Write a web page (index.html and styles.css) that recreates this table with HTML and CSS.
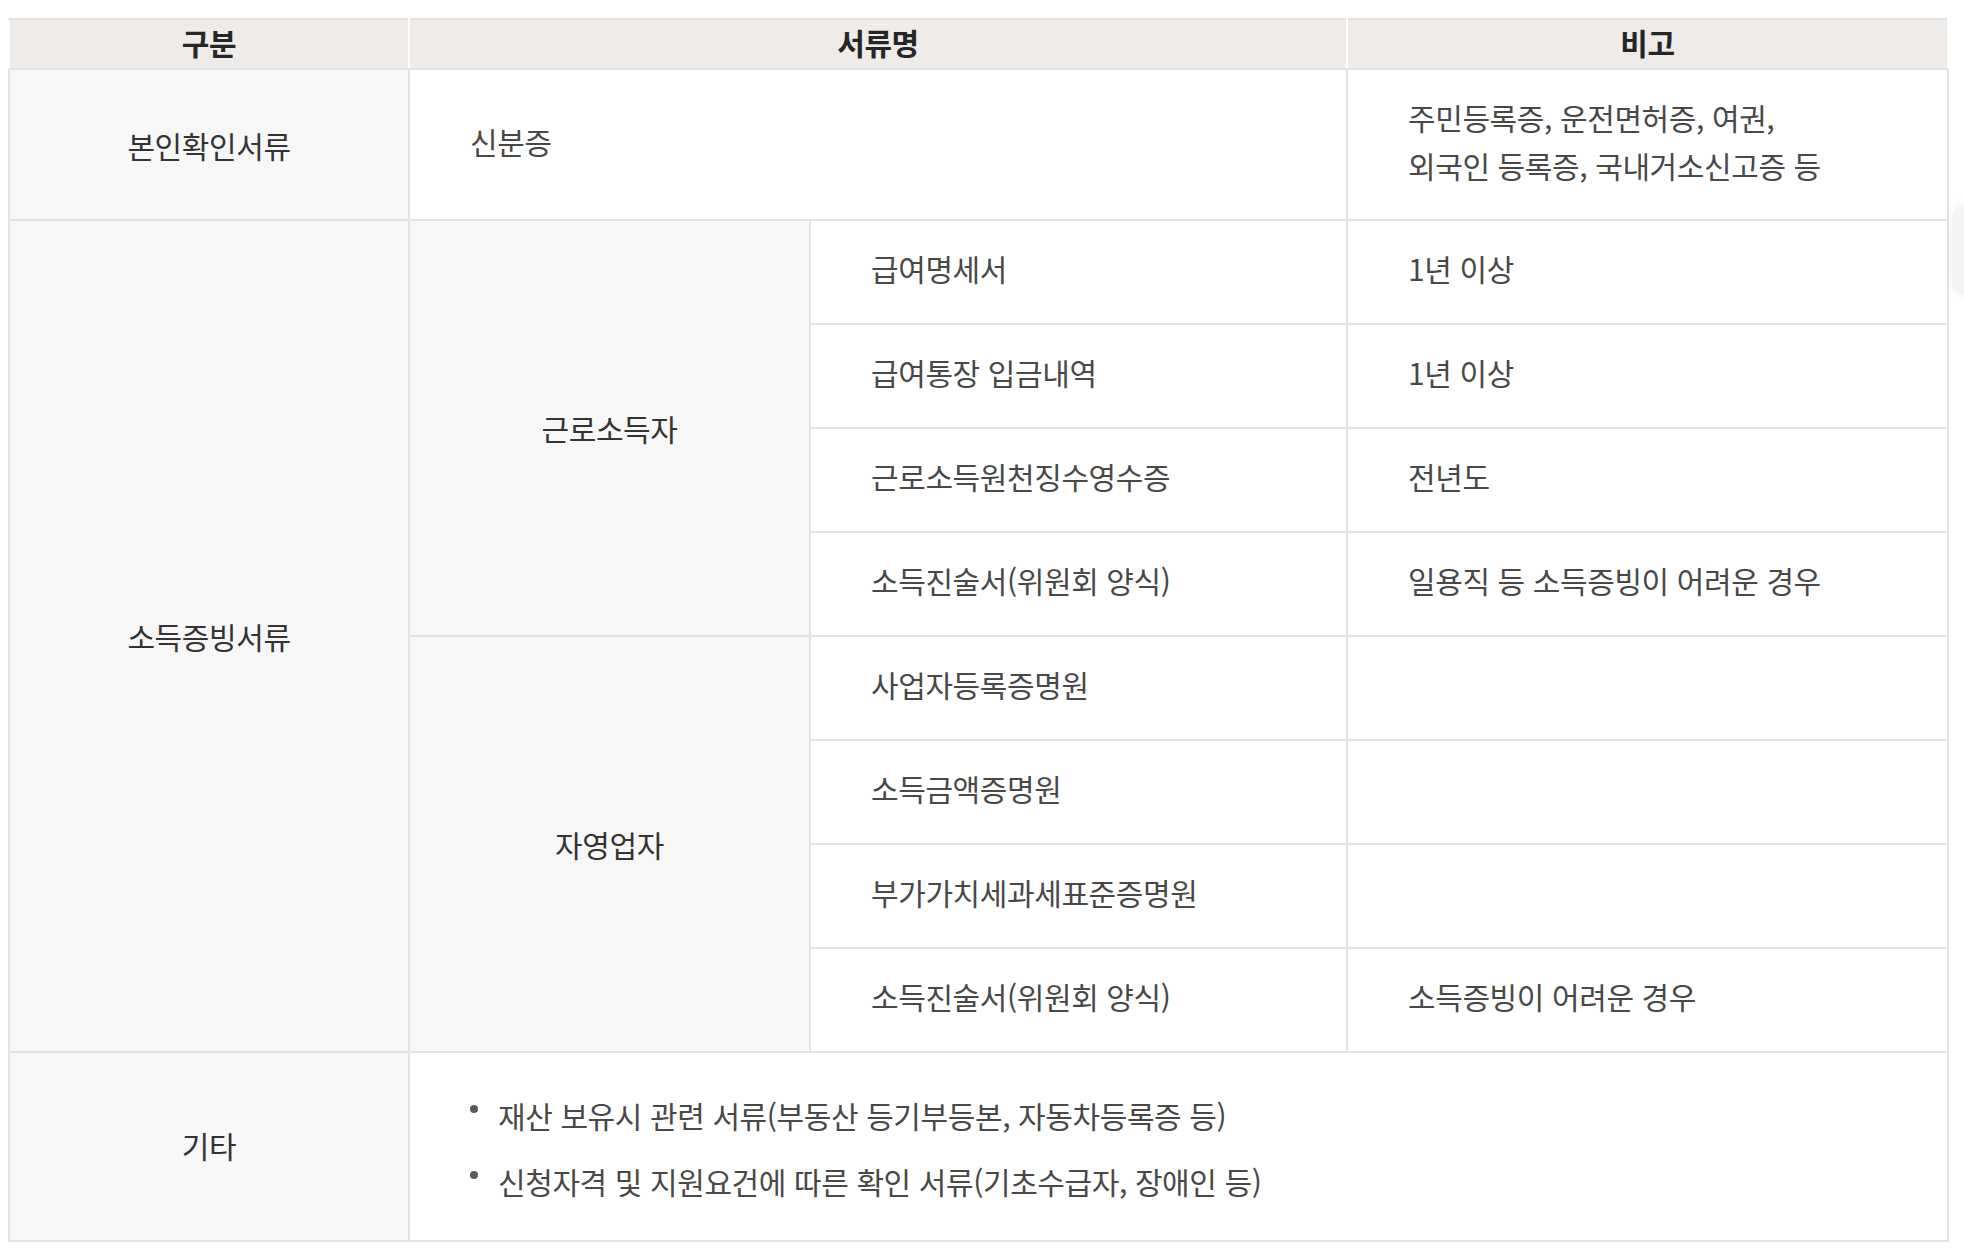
FILE: index.html
```html
<!DOCTYPE html>
<html lang="ko">
<head>
<meta charset="utf-8">
<title>서류 안내</title>
<link rel="stylesheet" href="styles.css">
</head>
<body>
<div class="wrap">
  <table class="doc-table">
    <colgroup>
      <col class="c1">
      <col class="c2">
      <col class="c3">
      <col class="c4">
    </colgroup>
    <thead>
      <tr class="head-row">
        <th>구분</th>
        <th colspan="2">서류명</th>
        <th>비고</th>
      </tr>
    </thead>
    <tbody>
      <tr class="row-id">
        <td class="label">본인확인서류</td>
        <td colspan="2" class="text">신분증</td>
        <td class="text">주민등록증, 운전면허증, 여권,<br>외국인 등록증, 국내거소신고증 등</td>
      </tr>
      <tr class="row-sub">
        <td class="label" rowspan="8">소득증빙서류</td>
        <td class="label" rowspan="4">근로소득자</td>
        <td class="text">급여명세서</td>
        <td class="text">1년 이상</td>
      </tr>
      <tr class="row-sub">
        <td class="text">급여통장 입금내역</td>
        <td class="text">1년 이상</td>
      </tr>
      <tr class="row-sub">
        <td class="text">근로소득원천징수영수증</td>
        <td class="text">전년도</td>
      </tr>
      <tr class="row-sub">
        <td class="text">소득진술서(위원회 양식)</td>
        <td class="text">일용직 등 소득증빙이 어려운 경우</td>
      </tr>
      <tr class="row-sub">
        <td class="label" rowspan="4">자영업자</td>
        <td class="text">사업자등록증명원</td>
        <td class="text"></td>
      </tr>
      <tr class="row-sub">
        <td class="text">소득금액증명원</td>
        <td class="text"></td>
      </tr>
      <tr class="row-sub">
        <td class="text">부가가치세과세표준증명원</td>
        <td class="text"></td>
      </tr>
      <tr class="row-sub">
        <td class="text">소득진술서(위원회 양식)</td>
        <td class="text">소득증빙이 어려운 경우</td>
      </tr>
      <tr class="row-etc">
        <td class="label label-etc">기타</td>
        <td colspan="3" class="text text-list">
          <ul class="bullets">
            <li>재산 보유시 관련 서류(부동산 등기부등본, 자동차등록증 등)</li>
            <li>신청자격 및 지원요건에 따른 확인 서류(기초수급자, 장애인 등)</li>
          </ul>
        </td>
      </tr>
    </tbody>
  </table>
  <div class="edge-shadow"></div>
</div>
</body>
</html>
```

FILE: styles.css
```css
html, body {
  margin: 0;
  padding: 0;
  background: #ffffff;
}

body {
  font-family: "Noto Sans CJK KR", "Noto Sans", sans-serif;
  color: #484848;
}

.wrap {
  position: relative;
  padding: 18px 0 0 8px;
}

.doc-table {
  width: 1939px;
  table-layout: fixed;
  border-collapse: collapse;
  font-size: 30px;
  letter-spacing: -0.4px;
  line-height: 1.6;
}

.c1 { width: 400px; }
.c2 { width: 401px; }
.c3 { width: 537px; }
.c4 { width: 601px; }

.head-row { height: 50px; }

.doc-table th {
  background: #efebe8;
  color: #262626;
  font-weight: 700;
  text-align: center;
  vertical-align: middle;
  padding: 0 0 4px 0;
  line-height: 1.3;
  border-top: 2px solid #e3e3e3;
  border-bottom: 2px solid #e3e3e3;
  border-left: 2px solid #ffffff;
  border-right: 2px solid #ffffff;
}

.doc-table td {
  border: 2px solid #e3e3e3;
  vertical-align: middle;
  padding: 0;
}

.doc-table td.label {
  background: #f7f7f7;
  color: #333333;
  text-align: center;
}

.doc-table td.label-etc {
  padding-bottom: 3px;
}

.doc-table td.text {
  background: #ffffff;
  text-align: left;
  padding: 0 0 8px 60px;
  color: #484848;
}

.doc-table td.text-list {
  padding: 3px 0 0 60px;
}

.row-id { height: 151px; }
.row-sub { height: 104px; }
.row-etc { height: 189px; }

.bullets {
  list-style: none;
  margin: 0;
  padding: 0;
}

.bullets li {
  position: relative;
  padding-left: 28px;
}

.bullets li + li {
  margin-top: 18px;
}

.bullets li::before {
  content: "";
  position: absolute;
  left: 0;
  top: 14px;
  width: 8px;
  height: 8px;
  border-radius: 50%;
  background: #5a5a5a;
}

.edge-shadow {
  position: absolute;
  left: 1952px;
  top: 205px;
  width: 40px;
  height: 90px;
  border-radius: 14px;
  background: #f4f4f4;
  box-shadow: 0 0 12px rgba(0, 0, 0, 0.06);
}
```
